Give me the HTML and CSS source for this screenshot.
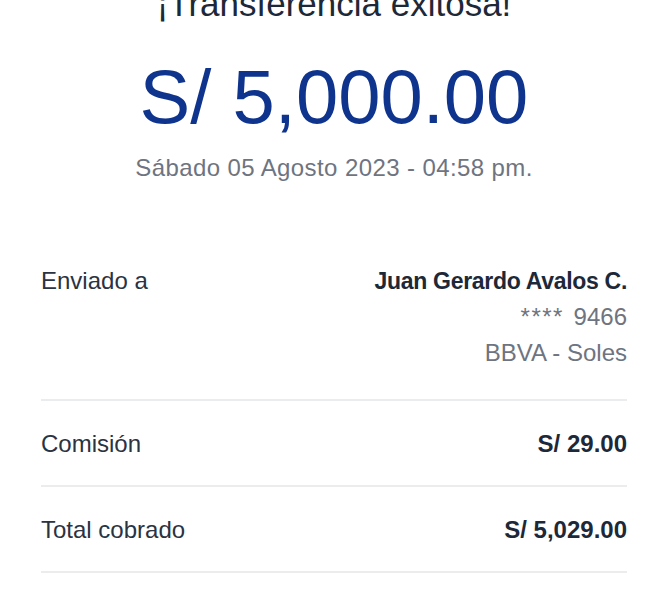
FILE: index.html
```html
<!DOCTYPE html>
<html lang="es">
<head>
<meta charset="utf-8">
<title>Transferencia exitosa</title>
<link rel="stylesheet" href="styles.css">
</head>
<body>
<main class="receipt">
  <header class="hero">
    <h1 class="title">¡Transferencia exitosa!</h1>
    <div class="amount">S/ 5,000.00</div>
    <div class="date">Sábado 05 Agosto 2023 - 04:58 pm.</div>
  </header>
  <section class="details">
    <div class="row row-multi">
      <div class="label">Enviado a</div>
      <div class="value">
        <div class="strong name">Juan Gerardo Avalos C.</div>
        <div class="muted"><span class="stars">****</span> 9466</div>
        <div class="muted">BBVA - Soles</div>
      </div>
    </div>
    <div class="row">
      <div class="label">Comisión</div>
      <div class="value"><div class="strong">S/ 29.00</div></div>
    </div>
    <div class="row">
      <div class="label">Total cobrado</div>
      <div class="value"><div class="strong">S/ 5,029.00</div></div>
    </div>
  </section>
</main>
</body>
</html>
```
FILE: styles.css
```css
html, body {
  margin: 0;
  padding: 0;
  background: #ffffff;
}
body {
  font-family: "Liberation Sans", Arial, sans-serif;
  color: #1f2a3a;
  overflow: hidden;
}
.receipt {
  padding: 0 41px;
}
.hero {
  display: flex;
  flex-direction: column;
  align-items: center;
}
.title {
  margin: -16px 0 0;
  font-size: 35px;
  line-height: 40px;
  font-weight: 500;
  color: #1d2838;
}
.amount {
  margin-top: 28px;
  font-size: 76px;
  line-height: 90px;
  color: #0f348d;
}
.date {
  margin-top: 11px;
  font-size: 24px;
  line-height: 30px;
  letter-spacing: 0.4px;
  color: #6e7480;
}
.details {
  margin-top: 55px;
}
.row {
  display: flex;
  justify-content: space-between;
  align-items: flex-start;
  border-bottom: 2px solid #eaecee;
  padding: 25px 0 23px;
}
.row-multi {
  padding-bottom: 28px;
}
.label {
  font-size: 24px;
  line-height: 36px;
  color: #2a3342;
}
.value {
  display: flex;
  flex-direction: column;
  align-items: flex-end;
  font-size: 24px;
  line-height: 36px;
}
.strong {
  font-weight: 700;
  color: #1d2838;
}
.name {
  font-size: 23px;
  letter-spacing: -0.3px;
}
.muted {
  color: #6e7480;
}
.stars {
  letter-spacing: 1.5px;
  margin-right: 3px;
}
```
